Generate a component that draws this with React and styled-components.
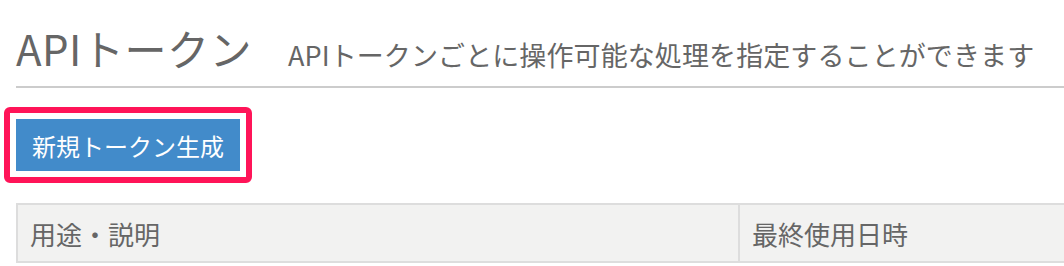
import React from "react";
import styled, { createGlobalStyle } from "styled-components";

const GlobalStyle = createGlobalStyle`
    body {
        margin: 0;
        background-color: #ffffff;
        font-family: "Noto Sans CJK JP", "Noto Sans", sans-serif;
        overflow: hidden;
    }
`;

const Page = styled.div`
    width: 1064px;
    height: 266px;
    padding-left: 16px;
    box-sizing: border-box;
    overflow: hidden;
`;

const Header = styled.div`
    display: flex;
    align-items: baseline;
    gap: 36px;
    padding: 24px 0 7px;
    border-bottom: 2px solid #cccccc;
    line-height: 48px;
`;

const Title = styled.h1`
    margin: 0;
    font-size: 42px;
    font-weight: normal;
    letter-spacing: 0.5px;
    color: #666666;
`;

const Subtitle = styled.small`
    font-size: 27px;
    letter-spacing: 0.1px;
    color: #666666;
    white-space: nowrap;
`;

const Highlight = styled.div`
    display: inline-block;
    margin: 19px 0 0 -12px;
    padding: 6px;
    border: 6px solid #ff1458;
    border-radius: 6px;
`;

const PrimaryButton = styled.button`
    display: block;
    width: 224px;
    height: 52px;
    padding: 0;
    border: none;
    background-color: #428bca;
    color: #ffffff;
    font-family: inherit;
    font-size: 24px;
    cursor: pointer;
`;

const Table = styled.table`
    width: 1120px;
    margin-top: 20px;
    border-collapse: collapse;
`;

const Th = styled.th`
    width: ${(p) => p.$width || "auto"};
    height: 58px;
    padding: 0 12px;
    border: 2px solid #dddddd;
    background-color: #f2f2f1;
    color: #666666;
    font-size: 26px;
    font-weight: normal;
    text-align: left;
    box-sizing: border-box;
`;

export default function App() {
    return (
        <>
            <GlobalStyle />
            <Page>
                <Header>
                    <Title>APIトークン</Title>
                    <Subtitle>APIトークンごとに操作可能な処理を指定することができます</Subtitle>
                </Header>
                <Highlight>
                    <PrimaryButton type="button">新規トークン生成</PrimaryButton>
                </Highlight>
                <Table>
                    <thead>
                        <tr>
                            <Th $width="722px">用途・説明</Th>
                            <Th>最終使用日時</Th>
                        </tr>
                    </thead>
                </Table>
            </Page>
        </>
    );
}
